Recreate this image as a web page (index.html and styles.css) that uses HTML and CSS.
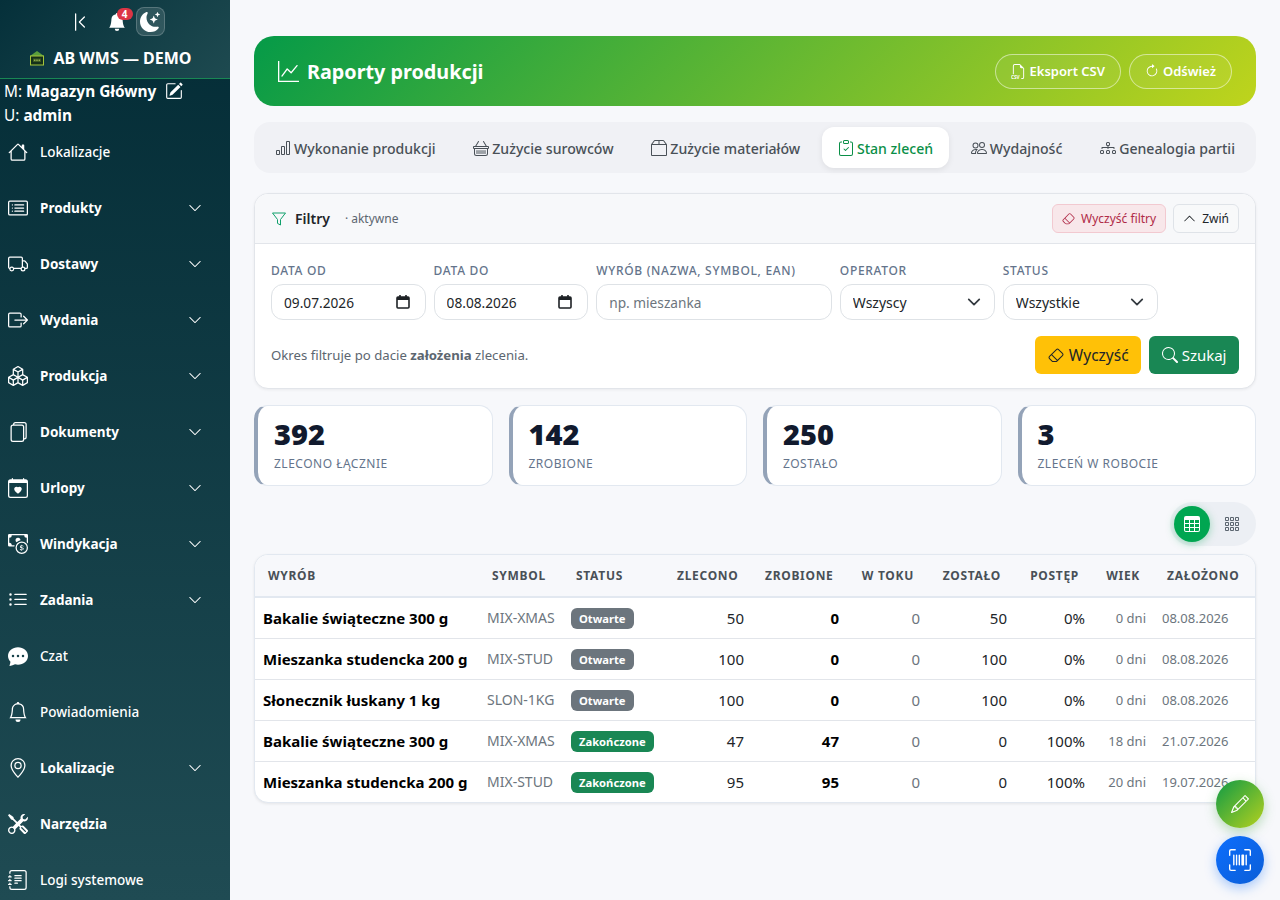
FILE: index.html
```html
<!DOCTYPE html>
<html lang="pl">
<head>
    <meta charset="UTF-8">
    <meta name="viewport" content="width=device-width, initial-scale=1.0">
    <title>Raporty produkcji</title>
    <link rel="stylesheet" href="styles.css">
</head>
<body>
    <svg class="sprite" xmlns="http://www.w3.org/2000/svg">
        <symbol id="i-house" viewBox="0 0 16 16"><path d="M8.707 1.5a1 1 0 0 0-1.414 0L.646 8.146a.5.5 0 0 0 .708.708L2 8.207V13.5A1.5 1.5 0 0 0 3.5 15h9a1.5 1.5 0 0 0 1.5-1.5V8.207l.646.647a.5.5 0 0 0 .708-.708L13 5.793V2.5a.5.5 0 0 0-.5-.5h-1a.5.5 0 0 0-.5.5v1.293zM13 7.207V13.5a.5.5 0 0 1-.5.5h-9a.5.5 0 0 1-.5-.5V7.207l5-5z"/></symbol>
        <symbol id="i-card" viewBox="0 0 16 16"><path d="M14.5 3a.5.5 0 0 1 .5.5v9a.5.5 0 0 1-.5.5h-13a.5.5 0 0 1-.5-.5v-9a.5.5 0 0 1 .5-.5zm-13-1A1.5 1.5 0 0 0 0 3.5v9A1.5 1.5 0 0 0 1.5 14h13a1.5 1.5 0 0 0 1.5-1.5v-9A1.5 1.5 0 0 0 14.5 2z"/><path d="M5 8a.5.5 0 0 1 .5-.5h7a.5.5 0 0 1 0 1h-7A.5.5 0 0 1 5 8m0-2.5a.5.5 0 0 1 .5-.5h7a.5.5 0 0 1 0 1h-7a.5.5 0 0 1-.5-.5m0 5a.5.5 0 0 1 .5-.5h7a.5.5 0 0 1 0 1h-7a.5.5 0 0 1-.5-.5m-1-5a.5.5 0 1 1-1 0 .5.5 0 0 1 1 0M4 8a.5.5 0 1 1-1 0 .5.5 0 0 1 1 0m0 2.5a.5.5 0 1 1-1 0 .5.5 0 0 1 1 0"/></symbol>
        <symbol id="i-truck" viewBox="0 0 16 16"><path d="M0 3.5A1.5 1.5 0 0 1 1.5 2h9A1.5 1.5 0 0 1 12 3.5V5h1.02a1.5 1.5 0 0 1 1.17.563l1.481 1.85a1.5 1.5 0 0 1 .329.938V10.5a1.5 1.5 0 0 1-1.5 1.5H14a2 2 0 1 1-4 0H5a2 2 0 1 1-3.998-.085A1.5 1.5 0 0 1 0 10.5zm1.294 7.456A2 2 0 0 1 4.732 11h5.536a2 2 0 0 1 .732-.732V3.5a.5.5 0 0 0-.5-.5h-9a.5.5 0 0 0-.5.5v7a.5.5 0 0 0 .294.456M12 10a2 2 0 0 1 1.732 1h.768a.5.5 0 0 0 .5-.5V8.35a.5.5 0 0 0-.11-.312l-1.48-1.85A.5.5 0 0 0 13.02 6H12zm-9 1a1 1 0 1 0 0 2 1 1 0 0 0 0-2m9 0a1 1 0 1 0 0 2 1 1 0 0 0 0-2"/></symbol>
        <symbol id="i-out" viewBox="0 0 16 16"><path d="M10 12.5a.5.5 0 0 1-.5.5h-8a.5.5 0 0 1-.5-.5v-9a.5.5 0 0 1 .5-.5h8a.5.5 0 0 1 .5.5v2a.5.5 0 0 0 1 0v-2A1.5 1.5 0 0 0 9.5 2h-8A1.5 1.5 0 0 0 0 3.5v9A1.5 1.5 0 0 0 1.5 14h8a1.5 1.5 0 0 0 1.5-1.5v-2a.5.5 0 0 0-1 0z"/><path d="M15.854 8.354a.5.5 0 0 0 0-.708l-3-3a.5.5 0 0 0-.708.708L14.293 7.5H5.5a.5.5 0 0 0 0 1h8.793l-2.147 2.146a.5.5 0 0 0 .708.708z"/></symbol>
        <symbol id="i-boxes" viewBox="0 0 16 16"><path d="M7.752.066a.5.5 0 0 1 .496 0l3.75 2.143a.5.5 0 0 1 .252.434v3.995l3.498 2A.5.5 0 0 1 16 9.07v4.286a.5.5 0 0 1-.252.434l-3.75 2.143a.5.5 0 0 1-.496 0l-3.502-2-3.502 2.001a.5.5 0 0 1-.496 0l-3.75-2.143A.5.5 0 0 1 0 13.357V9.071a.5.5 0 0 1 .252-.434L3.75 6.638V2.643a.5.5 0 0 1 .252-.434zM4.25 7.504 1.508 9.071l2.742 1.567 2.742-1.567zM7.5 9.933l-2.75 1.571v3.134l2.75-1.571zm1 3.134 2.75 1.571v-3.134L8.5 9.933zm.508-3.996 2.742 1.567 2.742-1.567-2.742-1.567zm2.242-2.433V3.504L8.5 5.076V8.21zM7.5 8.21V5.076L4.75 3.504v3.134zM5.258 2.643 8 4.21l2.742-1.567L8 1.076zM15 9.933l-2.75 1.571v3.134L15 13.067zM3.75 14.638v-3.134L1 9.933v3.134z"/></symbol>
        <symbol id="i-files" viewBox="0 0 16 16"><path d="M13 0H6a2 2 0 0 0-2 2 2 2 0 0 0-2 2v10a2 2 0 0 0 2 2h7a2 2 0 0 0 2-2 2 2 0 0 0 2-2V2a2 2 0 0 0-2-2m0 13V4a2 2 0 0 0-2-2H5a1 1 0 0 1 1-1h7a1 1 0 0 1 1 1v10a1 1 0 0 1-1 1M3 4a1 1 0 0 1 1-1h7a1 1 0 0 1 1 1v10a1 1 0 0 1-1 1H4a1 1 0 0 1-1-1z"/></symbol>
        <symbol id="i-cal-heart" viewBox="0 0 16 16"><path fill-rule="evenodd" d="M4 .5a.5.5 0 0 0-1 0V1H2a2 2 0 0 0-2 2v11a2 2 0 0 0 2 2h12a2 2 0 0 0 2-2V3a2 2 0 0 0-2-2h-1V.5a.5.5 0 0 0-1 0V1H4zM1 14V4h14v10a1 1 0 0 1-1 1H2a1 1 0 0 1-1-1m7-6.507c1.664-1.711 5.825 1.283 0 5.132-5.825-3.85-1.664-6.843 0-5.132"/></symbol>
        <symbol id="i-cash" viewBox="0 0 16 16"><path fill-rule="evenodd" d="M11 15a4 4 0 1 0 0-8 4 4 0 0 0 0 8m5-4a5 5 0 1 1-10 0 5 5 0 0 1 10 0"/><path d="M9.438 11.944c.047.596.518 1.06 1.363 1.116v.44h.375v-.443c.875-.061 1.386-.529 1.386-1.207 0-.618-.39-.936-1.09-1.1l-.296-.07v-1.2c.376.043.614.248.671.532h.658c-.047-.575-.54-1.024-1.329-1.073V8.5h-.375v.45c-.747.073-1.255.522-1.255 1.158 0 .562.378.92 1.007 1.066l.248.061v1.272c-.384-.058-.639-.27-.696-.563h-.668zm1.36-1.354c-.369-.085-.569-.26-.569-.522 0-.294.216-.514.572-.578v1.1zm.432.746c.449.104.655.272.655.569 0 .339-.257.571-.709.635v-1.205z"/><path d="M1 0a1 1 0 0 0-1 1v8a1 1 0 0 0 1 1h4.083q.088-.517.258-1H3a2 2 0 0 0-2-2V3a2 2 0 0 0 2-2h10a2 2 0 0 0 2 2v3.528c.38.34.717.728 1 1.154V1a1 1 0 0 0-1-1z"/><path d="M9.998 5.083 10 5a2 2 0 1 0-3.132 1.65 6 6 0 0 1 3.13-1.567"/></symbol>
        <symbol id="i-list" viewBox="0 0 16 16"><path d="M5 11.5a.5.5 0 0 1 .5-.5h9a.5.5 0 0 1 0 1h-9a.5.5 0 0 1-.5-.5m0-4a.5.5 0 0 1 .5-.5h9a.5.5 0 0 1 0 1h-9a.5.5 0 0 1-.5-.5m0-4a.5.5 0 0 1 .5-.5h9a.5.5 0 0 1 0 1h-9a.5.5 0 0 1-.5-.5m-3 1a1 1 0 1 0 0-2 1 1 0 0 0 0 2m0 4a1 1 0 1 0 0-2 1 1 0 0 0 0 2m0 4a1 1 0 1 0 0-2 1 1 0 0 0 0 2"/></symbol>
        <symbol id="i-chat" viewBox="0 0 16 16"><path d="M16 8c0 3.866-3.582 7-8 7a9 9 0 0 1-2.347-.306c-.584.296-1.925.864-4.181 1.234-.2.032-.352-.176-.273-.362.354-.836.674-1.95.77-2.966C.744 11.37 0 9.76 0 8c0-3.866 3.582-7 8-7s8 3.134 8 7M5 8a1 1 0 1 0-2 0 1 1 0 0 0 2 0m4 0a1 1 0 1 0-2 0 1 1 0 0 0 2 0m3 1a1 1 0 1 0 0-2 1 1 0 0 0 0 2"/></symbol>
        <symbol id="i-bell" viewBox="0 0 16 16"><path d="M8 16a2 2 0 0 0 2-2H6a2 2 0 0 0 2 2M8 1.918l-.797.161A4 4 0 0 0 4 6c0 .628-.134 2.197-.459 3.742-.16.767-.376 1.566-.663 2.258h10.244c-.287-.692-.502-1.49-.663-2.258C12.134 8.197 12 6.628 12 6a4 4 0 0 0-3.203-3.92zM14.22 12c.223.447.481.801.78 1H1c.299-.199.557-.553.78-1C2.68 10.2 3 6.88 3 6c0-2.42 1.72-4.44 4.005-4.901a1 1 0 1 1 1.99 0A5 5 0 0 1 13 6c0 .88.32 4.2 1.22 6"/></symbol>
        <symbol id="i-bell-fill" viewBox="0 0 16 16"><path d="M8 16a2 2 0 0 0 2-2H6a2 2 0 0 0 2 2m.995-14.901a1 1 0 1 0-1.99 0A5 5 0 0 0 3 6c0 1.098-.5 6-2 7h14c-1.5-1-2-5.902-2-7 0-2.42-1.72-4.44-4.005-4.901"/></symbol>
        <symbol id="i-geo" viewBox="0 0 16 16"><path d="M12.166 8.94c-.524 1.062-1.234 2.12-1.96 3.07A32 32 0 0 1 8 14.58a32 32 0 0 1-2.206-2.57c-.726-.95-1.436-2.008-1.96-3.07C3.304 7.867 3 6.862 3 6a5 5 0 0 1 10 0c0 .862-.305 1.867-.834 2.94M8 16s6-5.686 6-10A6 6 0 0 0 2 6c0 4.314 6 10 6 10"/><path d="M8 8a2 2 0 1 1 0-4 2 2 0 0 1 0 4m0 1a3 3 0 1 0 0-6 3 3 0 0 0 0 6"/></symbol>
        <symbol id="i-tools" viewBox="0 0 16 16"><path d="M1 0 0 1l2.2 3.081a1 1 0 0 0 .815.419h.07a1 1 0 0 1 .708.293l2.675 2.675-2.617 2.654A3.003 3.003 0 0 0 0 13a3 3 0 1 0 5.878-.851l2.654-2.617.968.968-.305.914a1 1 0 0 0 .242 1.023l3.27 3.27a.997.997 0 0 0 1.414 0l1.586-1.586a.997.997 0 0 0 0-1.414l-3.27-3.27a1 1 0 0 0-1.023-.242L10.5 9.5l-.96-.96 2.68-2.643A3.005 3.005 0 0 0 16 3q0-.405-.102-.777l-2.14 2.141L12 4l-.364-1.757L13.777.102a3 3 0 0 0-3.675 3.68L7.462 6.46 4.793 3.793a1 1 0 0 1-.293-.707v-.071a1 1 0 0 0-.419-.814zm9.646 10.646a.5.5 0 0 1 .708 0l2.914 2.915a.5.5 0 0 1-.707.707l-2.915-2.914a.5.5 0 0 1 0-.708M3 11l.471.242.529.026.287.445.445.287.026.529L5 13l-.242.471-.026.529-.445.287-.287.445-.529.026L3 15l-.471-.242L2 14.732l-.287-.445L1.268 14l-.026-.529L1 13l.242-.471.026-.529.445-.287.287-.445.529-.026z"/></symbol>
        <symbol id="i-journal" viewBox="0 0 16 16"><path d="M5 10.5a.5.5 0 0 1 .5-.5h2a.5.5 0 0 1 0 1h-2a.5.5 0 0 1-.5-.5m0-2a.5.5 0 0 1 .5-.5h5a.5.5 0 0 1 0 1h-5a.5.5 0 0 1-.5-.5m0-2a.5.5 0 0 1 .5-.5h5a.5.5 0 0 1 0 1h-5a.5.5 0 0 1-.5-.5m0-2a.5.5 0 0 1 .5-.5h5a.5.5 0 0 1 0 1h-5a.5.5 0 0 1-.5-.5"/><path d="M3 0h10a2 2 0 0 1 2 2v12a2 2 0 0 1-2 2H3a2 2 0 0 1-2-2v-1h1v1a1 1 0 0 0 1 1h10a1 1 0 0 0 1-1V2a1 1 0 0 0-1-1H3a1 1 0 0 0-1 1v1H1V2a2 2 0 0 1 2-2"/><path d="M1 5v-.5a.5.5 0 0 1 1 0V5h.5a.5.5 0 0 1 0 1h-2a.5.5 0 0 1 0-1zm0 3v-.5a.5.5 0 0 1 1 0V8h.5a.5.5 0 0 1 0 1h-2a.5.5 0 0 1 0-1zm0 3v-.5a.5.5 0 0 1 1 0v.5h.5a.5.5 0 0 1 0 1h-2a.5.5 0 0 1 0-1z"/></symbol>
        <symbol id="i-down" viewBox="0 0 16 16"><path d="M1.646 4.646a.5.5 0 0 1 .708 0L8 10.293l5.646-5.647a.5.5 0 0 1 .708.708l-6 6a.5.5 0 0 1-.708 0l-6-6a.5.5 0 0 1 0-.708"/></symbol>
        <symbol id="i-up" viewBox="0 0 16 16"><path d="M7.646 4.646a.5.5 0 0 1 .708 0l6 6a.5.5 0 0 1-.708.708L8 5.707l-5.646 5.647a.5.5 0 0 1-.708-.708z"/></symbol>
        <symbol id="i-moon" viewBox="0 0 16 16"><path d="M6 .278a.77.77 0 0 1 .08.858 7.2 7.2 0 0 0-.878 3.46c0 4.021 3.278 7.277 7.318 7.277q.792-.001 1.533-.16a.79.79 0 0 1 .81.316.73.73 0 0 1-.031.893A8.35 8.35 0 0 1 8.344 16C3.734 16 0 12.286 0 7.71 0 4.266 2.114 1.312 5.124.06A.75.75 0 0 1 6 .278"/><path d="M10.794 3.148a.217.217 0 0 1 .412 0l.387 1.162c.173.518.579.924 1.097 1.097l1.162.387a.217.217 0 0 1 0 .412l-1.162.387a1.73 1.73 0 0 0-1.097 1.097l-.387 1.162a.217.217 0 0 1-.412 0l-.387-1.162A1.73 1.73 0 0 0 9.31 6.593l-1.162-.387a.217.217 0 0 1 0-.412l1.162-.387a1.73 1.73 0 0 0 1.097-1.097zM13.863.099a.145.145 0 0 1 .274 0l.258.774c.115.346.386.617.732.732l.774.258a.145.145 0 0 1 0 .274l-.774.258a1.16 1.16 0 0 0-.732.732l-.258.774a.145.145 0 0 1-.274 0l-.258-.774a1.16 1.16 0 0 0-.732-.732l-.774-.258a.145.145 0 0 1 0-.274l.774-.258c.346-.115.617-.386.732-.732z"/></symbol>
        <symbol id="i-edit" viewBox="0 0 16 16"><path d="M15.502 1.94a.5.5 0 0 1 0 .706L14.459 3.69l-2-2L13.502.646a.5.5 0 0 1 .707 0l1.293 1.293zm-1.75 2.456-2-2L4.939 9.21a.5.5 0 0 0-.121.196l-.805 2.414a.25.25 0 0 0 .316.316l2.414-.805a.5.5 0 0 0 .196-.12l6.813-6.814z"/><path d="M1 13.5A1.5 1.5 0 0 0 2.5 15h11a1.5 1.5 0 0 0 1.5-1.5v-6a.5.5 0 0 0-1 0v6a.5.5 0 0 1-.5.5h-11a.5.5 0 0 1-.5-.5v-11a.5.5 0 0 1 .5-.5H9a.5.5 0 0 0 0-1H2.5A1.5 1.5 0 0 0 1 2.5z"/></symbol>
        <symbol id="i-collapse" viewBox="0 0 16 16"><path d="M11.854 3.646a.5.5 0 0 1 0 .708L8.207 8l3.647 3.646a.5.5 0 0 1-.708.708l-4-4a.5.5 0 0 1 0-.708l4-4a.5.5 0 0 1 .708 0M4.5 1a.5.5 0 0 0-.5.5v13a.5.5 0 0 0 1 0v-13a.5.5 0 0 0-.5-.5"/></symbol>
        <symbol id="i-graph" viewBox="0 0 16 16"><path d="M0 0h1v15h15v1H0zm14.817 3.113a.5.5 0 0 1 .07.704l-4.5 5.5a.5.5 0 0 1-.74.037L7.06 6.767l-3.656 5.027a.5.5 0 0 1-.808-.588l4-5.5a.5.5 0 0 1 .758-.06l2.609 2.61 4.15-5.073a.5.5 0 0 1 .704-.07"/></symbol>
        <symbol id="i-bars" viewBox="0 0 16 16"><path d="M4 11H2v3h2zm5-4H7v7h2zm5-5v12h-2V2zm-2-1a1 1 0 0 0-1 1v12a1 1 0 0 0 1 1h2a1 1 0 0 0 1-1V2a1 1 0 0 0-1-1zM6 7a1 1 0 0 1 1-1h2a1 1 0 0 1 1 1v7a1 1 0 0 1-1 1H7a1 1 0 0 1-1-1zm-5 4a1 1 0 0 1 1-1h2a1 1 0 0 1 1 1v3a1 1 0 0 1-1 1H2a1 1 0 0 1-1-1z"/></symbol>
        <symbol id="i-basket" viewBox="0 0 16 16"><path d="M5.757 1.071a.5.5 0 0 1 .172.686L3.383 6h9.234L10.07 1.757a.5.5 0 1 1 .858-.514L13.783 6H15a1 1 0 0 1 1 1v1a1 1 0 0 1-1 1v4.5a2.5 2.5 0 0 1-2.5 2.5h-9A2.5 2.5 0 0 1 1 13.5V9a1 1 0 0 1-1-1V7a1 1 0 0 1 1-1h1.217L5.07 1.243a.5.5 0 0 1 .686-.172zM2 9v4.5A1.5 1.5 0 0 0 3.5 15h9a1.5 1.5 0 0 0 1.5-1.5V9zM1 7v1h14V7zm3 3a.5.5 0 0 1 .5.5v3a.5.5 0 0 1-1 0v-3A.5.5 0 0 1 4 10m2 0a.5.5 0 0 1 .5.5v3a.5.5 0 0 1-1 0v-3A.5.5 0 0 1 6 10m2 0a.5.5 0 0 1 .5.5v3a.5.5 0 0 1-1 0v-3A.5.5 0 0 1 8 10m2 0a.5.5 0 0 1 .5.5v3a.5.5 0 0 1-1 0v-3a.5.5 0 0 1 .5-.5m2 0a.5.5 0 0 1 .5.5v3a.5.5 0 0 1-1 0v-3a.5.5 0 0 1 .5-.5"/></symbol>
        <symbol id="i-box" viewBox="0 0 16 16"><path d="M2.95.4a1 1 0 0 1 .8-.4h8.5a1 1 0 0 1 .8.4l2.85 3.8a.5.5 0 0 1 .1.3V15a1 1 0 0 1-1 1H1a1 1 0 0 1-1-1V4.5a.5.5 0 0 1 .1-.3zM7.5 1H3.75L1.5 4h6zm1 0v3h6l-2.25-3zM15 5H1v10h14z"/></symbol>
        <symbol id="i-clip" viewBox="0 0 16 16"><path d="M10.854 7.146a.5.5 0 0 1 0 .708l-3 3a.5.5 0 0 1-.708 0l-1.5-1.5a.5.5 0 1 1 .708-.708L7.5 9.793l2.646-2.647a.5.5 0 0 1 .708 0"/><path d="M4 1.5H3a2 2 0 0 0-2 2V14a2 2 0 0 0 2 2h10a2 2 0 0 0 2-2V3.5a2 2 0 0 0-2-2h-1v1h1a1 1 0 0 1 1 1V14a1 1 0 0 1-1 1H3a1 1 0 0 1-1-1V3.5a1 1 0 0 1 1-1h1z"/><path d="M9.5 1a.5.5 0 0 1 .5.5v1a.5.5 0 0 1-.5.5h-3a.5.5 0 0 1-.5-.5v-1a.5.5 0 0 1 .5-.5zm-3-1A1.5 1.5 0 0 0 5 1.5v1A1.5 1.5 0 0 0 6.5 4h3A1.5 1.5 0 0 0 11 2.5v-1A1.5 1.5 0 0 0 9.5 0z"/></symbol>
        <symbol id="i-people" viewBox="0 0 16 16"><path d="M15 14s1 0 1-1-1-4-5-4-5 3-5 4 1 1 1 1zm-7.978-1L7 12.996c.001-.264.167-1.03.76-1.72C8.312 10.629 9.282 10 11 10c1.717 0 2.687.63 3.24 1.276.593.69.758 1.457.76 1.72l-.008.002-.014.002zM11 7a2 2 0 1 0 0-4 2 2 0 0 0 0 4m3-2a3 3 0 1 1-6 0 3 3 0 0 1 6 0M6.936 9.28a6 6 0 0 0-1.23-.247A7 7 0 0 0 5 9c-4 0-5 3-5 4q0 1 1 1h4.216A2.24 2.24 0 0 1 5 13c0-1.01.377-2.042 1.09-2.904.243-.294.526-.569.846-.816M4.92 10A5.5 5.5 0 0 0 4 13H1c0-.26.164-1.03.76-1.724.545-.636 1.492-1.256 3.16-1.275ZM1.5 5.5a3 3 0 1 1 6 0 3 3 0 0 1-6 0m3-2a2 2 0 1 0 0 4 2 2 0 0 0 0-4"/></symbol>
        <symbol id="i-tree" viewBox="0 0 16 16"><path d="M6 3.5A1.5 1.5 0 0 1 7.5 2h1A1.5 1.5 0 0 1 10 3.5v1A1.5 1.5 0 0 1 8.5 6v1H14a.5.5 0 0 1 .5.5v1a.5.5 0 0 1-1 0V8h-5v.5a.5.5 0 0 1-1 0V8h-5v.5a.5.5 0 0 1-1 0v-1A.5.5 0 0 1 2 7h5.5V6A1.5 1.5 0 0 1 6 4.5zM8.5 5a.5.5 0 0 0 .5-.5v-1a.5.5 0 0 0-.5-.5h-1a.5.5 0 0 0-.5.5v1a.5.5 0 0 0 .5.5zM0 11.5A1.5 1.5 0 0 1 1.5 10h1A1.5 1.5 0 0 1 4 11.5v1A1.5 1.5 0 0 1 2.5 14h-1A1.5 1.5 0 0 1 0 12.5zm1.5-.5a.5.5 0 0 0-.5.5v1a.5.5 0 0 0 .5.5h1a.5.5 0 0 0 .5-.5v-1a.5.5 0 0 0-.5-.5zm4.5.5A1.5 1.5 0 0 1 7.5 10h1a1.5 1.5 0 0 1 1.5 1.5v1A1.5 1.5 0 0 1 8.5 14h-1A1.5 1.5 0 0 1 6 12.5zm1.5-.5a.5.5 0 0 0-.5.5v1a.5.5 0 0 0 .5.5h1a.5.5 0 0 0 .5-.5v-1a.5.5 0 0 0-.5-.5zm4.5.5a1.5 1.5 0 0 1 1.5-1.5h1a1.5 1.5 0 0 1 1.5 1.5v1a1.5 1.5 0 0 1-1.5 1.5h-1a1.5 1.5 0 0 1-1.5-1.5zm1.5-.5a.5.5 0 0 0-.5.5v1a.5.5 0 0 0 .5.5h1a.5.5 0 0 0 .5-.5v-1a.5.5 0 0 0-.5-.5z"/></symbol>
        <symbol id="i-refresh" viewBox="0 0 16 16"><path fill-rule="evenodd" d="M8 3a5 5 0 1 0 4.546 2.914.5.5 0 0 1 .908-.417A6 6 0 1 1 8 2z"/><path d="M8 4.466V.534a.25.25 0 0 1 .41-.192l2.36 1.966c.12.1.12.284 0 .384L8.41 4.658A.25.25 0 0 1 8 4.466"/></symbol>
        <symbol id="i-eraser" viewBox="0 0 16 16"><path d="M8.086 2.207a2 2 0 0 1 2.828 0l3.879 3.879a2 2 0 0 1 0 2.828l-5.5 5.5A2 2 0 0 1 7.879 15H5.12a2 2 0 0 1-1.414-.586l-2.5-2.5a2 2 0 0 1 0-2.828zm2.121.707a1 1 0 0 0-1.414 0L4.16 7.547l5.293 5.293 4.633-4.633a1 1 0 0 0 0-1.414zM8.746 13.547 3.453 8.254 1.914 9.793a1 1 0 0 0 0 1.414l2.5 2.5a1 1 0 0 0 .707.293H7.88a1 1 0 0 0 .707-.293z"/></symbol>
        <symbol id="i-search" viewBox="0 0 16 16"><path d="M11.742 10.344a6.5 6.5 0 1 0-1.397 1.398h-.001q.044.06.098.115l3.85 3.85a1 1 0 0 0 1.415-1.414l-3.85-3.85a1 1 0 0 0-.115-.1zM12 6.5a5.5 5.5 0 1 1-11 0 5.5 5.5 0 0 1 11 0"/></symbol>
        <symbol id="i-table" viewBox="0 0 16 16"><path d="M0 2a2 2 0 0 1 2-2h12a2 2 0 0 1 2 2v12a2 2 0 0 1-2 2H2a2 2 0 0 1-2-2zm15 2h-4v3h4zm0 4h-4v3h4zm0 4h-4v3h3a1 1 0 0 0 1-1zm-5 3v-3H6v3zm-5 0v-3H1v2a1 1 0 0 0 1 1zm-4-4h4V8H1zm0-4h4V4H1zm5-3v3h4V4zm4 4H6v3h4z"/></symbol>
        <symbol id="i-grid" viewBox="0 0 16 16"><path d="M4 2v2H2V2zm1 12v-2a1 1 0 0 0-1-1H2a1 1 0 0 0-1 1v2a1 1 0 0 0 1 1h2a1 1 0 0 0 1-1m0-5V7a1 1 0 0 0-1-1H2a1 1 0 0 0-1 1v2a1 1 0 0 0 1 1h2a1 1 0 0 0 1-1m0-5V2a1 1 0 0 0-1-1H2a1 1 0 0 0-1 1v2a1 1 0 0 0 1 1h2a1 1 0 0 0 1-1m5 10v-2a1 1 0 0 0-1-1H7a1 1 0 0 0-1 1v2a1 1 0 0 0 1 1h2a1 1 0 0 0 1-1m0-5V7a1 1 0 0 0-1-1H7a1 1 0 0 0-1 1v2a1 1 0 0 0 1 1h2a1 1 0 0 0 1-1m0-5V2a1 1 0 0 0-1-1H7a1 1 0 0 0-1 1v2a1 1 0 0 0 1 1h2a1 1 0 0 0 1-1M9 2v2H7V2zm5 0v2h-2V2zM4 7v2H2V7zm5 0v2H7V7zm5 0h-2v2h2zM4 12v2H2v-2zm5 0v2H7v-2zm5 0v2h-2v-2zM12 1a1 1 0 0 0-1 1v2a1 1 0 0 0 1 1h2a1 1 0 0 0 1-1V2a1 1 0 0 0-1-1zm-1 6a1 1 0 0 1 1-1h2a1 1 0 0 1 1 1v2a1 1 0 0 1-1 1h-2a1 1 0 0 1-1-1zm1 4a1 1 0 0 0-1 1v2a1 1 0 0 0 1 1h2a1 1 0 0 0 1-1v-2a1 1 0 0 0-1-1z"/></symbol>
        <symbol id="i-pencil" viewBox="0 0 16 16"><path d="M12.146.146a.5.5 0 0 1 .708 0l3 3a.5.5 0 0 1 0 .708l-10 10a.5.5 0 0 1-.168.11l-5 2a.5.5 0 0 1-.65-.65l2-5a.5.5 0 0 1 .11-.168zM11.207 2.5 13.5 4.793 14.793 3.5 12.5 1.207zm1.586 3L10.5 3.207 4 9.707V10h.5a.5.5 0 0 1 .5.5v.5h.5a.5.5 0 0 1 .5.5v.5h.293zm-9.761 5.175-.106.106-1.528 3.821 3.821-1.528.106-.106A.5.5 0 0 1 5 12.5V12h-.5a.5.5 0 0 1-.5-.5V11h-.5a.5.5 0 0 1-.468-.325"/></symbol>
        <symbol id="i-scan" viewBox="0 0 16 16"><path d="M1.5 1a.5.5 0 0 0-.5.5v3a.5.5 0 0 1-1 0v-3A1.5 1.5 0 0 1 1.5 0h3a.5.5 0 0 1 0 1zM11 .5a.5.5 0 0 1 .5-.5h3A1.5 1.5 0 0 1 16 1.5v3a.5.5 0 0 1-1 0v-3a.5.5 0 0 0-.5-.5h-3a.5.5 0 0 1-.5-.5M.5 11a.5.5 0 0 1 .5.5v3a.5.5 0 0 0 .5.5h3a.5.5 0 0 1 0 1h-3A1.5 1.5 0 0 1 0 14.5v-3a.5.5 0 0 1 .5-.5m15 0a.5.5 0 0 1 .5.5v3a1.5 1.5 0 0 1-1.5 1.5h-3a.5.5 0 0 1 0-1h3a.5.5 0 0 0 .5-.5v-3a.5.5 0 0 1 .5-.5M3 4.5a.5.5 0 0 1 1 0v7a.5.5 0 0 1-1 0zm2 0a.5.5 0 0 1 1 0v7a.5.5 0 0 1-1 0zm2 0a.5.5 0 0 1 1 0v7a.5.5 0 0 1-1 0zm2 0a.5.5 0 0 1 .5-.5h1a.5.5 0 0 1 .5.5v7a.5.5 0 0 1-.5.5h-1a.5.5 0 0 1-.5-.5zm3 0a.5.5 0 0 1 1 0v7a.5.5 0 0 1-1 0z"/></symbol>
        <symbol id="i-file" viewBox="0 0 16 16"><path d="M14 4.5V14a2 2 0 0 1-2 2h-1v-1h1a1 1 0 0 0 1-1V4.5h-2A1.5 1.5 0 0 1 9.5 3V1H4a1 1 0 0 0-1 1v9H2V2a2 2 0 0 1 2-2h5.5z"/></symbol>
    </svg>

    <aside class="sidebar">
        <div class="side-head">
            <div class="side-tools">
                <button class="side-tool"><svg class="ico-20"><use href="#i-collapse"/></svg></button>
                <button class="side-tool bell-tool">
                    <svg class="ico-18"><use href="#i-bell-fill"/></svg>
                    <span class="bell-badge">4</span>
                </button>
                <button class="side-tool theme-tool"><svg class="ico-20"><use href="#i-moon"/></svg></button>
            </div>
            <div class="brand">
                <svg class="brand-logo" viewBox="0 0 16 16">
                    <path d="M1 6 8 1l7 5z" fill="#5a9e3c"/>
                    <rect x="1.5" y="6" width="13" height="9" fill="#14301a" stroke="#a5c53a" stroke-width="1"/>
                    <rect x="4" y="8.5" width="8" height="3.5" fill="#3c5a22"/>
                    <path d="M5 10.2h1.4M7.3 10.2h1.4M9.6 10.2H11" stroke="#b9d06a" stroke-width="1"/>
                </svg>
                <span>AB WMS — DEMO</span>
            </div>
        </div>
        <div class="side-user">
            <div>M: <strong>Magazyn Główny</strong> <svg class="ico-18 edit-ico"><use href="#i-edit"/></svg></div>
            <div>U: <strong>admin</strong></div>
        </div>
        <nav class="side-nav">
            <a class="nav-item"><svg class="nav-ico"><use href="#i-house"/></svg><span>Lokalizacje</span></a>
            <a class="nav-item group"><svg class="nav-ico"><use href="#i-card"/></svg><span>Produkty</span><svg class="nav-arrow"><use href="#i-down"/></svg></a>
            <a class="nav-item group"><svg class="nav-ico"><use href="#i-truck"/></svg><span>Dostawy</span><svg class="nav-arrow"><use href="#i-down"/></svg></a>
            <a class="nav-item group"><svg class="nav-ico"><use href="#i-out"/></svg><span>Wydania</span><svg class="nav-arrow"><use href="#i-down"/></svg></a>
            <a class="nav-item group"><svg class="nav-ico"><use href="#i-boxes"/></svg><span>Produkcja</span><svg class="nav-arrow"><use href="#i-down"/></svg></a>
            <a class="nav-item group"><svg class="nav-ico"><use href="#i-files"/></svg><span>Dokumenty</span><svg class="nav-arrow"><use href="#i-down"/></svg></a>
            <a class="nav-item group"><svg class="nav-ico"><use href="#i-cal-heart"/></svg><span>Urlopy</span><svg class="nav-arrow"><use href="#i-down"/></svg></a>
            <a class="nav-item group"><svg class="nav-ico"><use href="#i-cash"/></svg><span>Windykacja</span><svg class="nav-arrow"><use href="#i-down"/></svg></a>
            <a class="nav-item group"><svg class="nav-ico"><use href="#i-list"/></svg><span>Zadania</span><svg class="nav-arrow"><use href="#i-down"/></svg></a>
            <a class="nav-item"><svg class="nav-ico"><use href="#i-chat"/></svg><span>Czat</span></a>
            <a class="nav-item"><svg class="nav-ico"><use href="#i-bell"/></svg><span>Powiadomienia</span></a>
            <a class="nav-item group"><svg class="nav-ico"><use href="#i-geo"/></svg><span>Lokalizacje</span><svg class="nav-arrow"><use href="#i-down"/></svg></a>
            <a class="nav-item group"><svg class="nav-ico"><use href="#i-tools"/></svg><span>Narzędzia</span></a>
            <a class="nav-item"><svg class="nav-ico"><use href="#i-journal"/></svg><span>Logi systemowe</span></a>
        </nav>
    </aside>

    <main class="content">
        <header class="hero">
            <h1><svg class="hero-ico"><use href="#i-graph"/></svg>Raporty produkcji</h1>
            <div class="hero-actions">
                <button class="hero-btn">
                    <svg class="ico-15" viewBox="0 0 16 16"><use href="#i-file"/><text x="0" y="15.5" class="csv-mark">CSV</text></svg>
                    Eksport CSV
                </button>
                <button class="hero-btn"><svg class="ico-14"><use href="#i-refresh"/></svg>Odśwież</button>
            </div>
        </header>

        <div class="tabs">
            <a class="tab"><svg class="ico-16"><use href="#i-bars"/></svg>Wykonanie produkcji</a>
            <a class="tab"><svg class="ico-16"><use href="#i-basket"/></svg>Zużycie surowców</a>
            <a class="tab"><svg class="ico-16"><use href="#i-box"/></svg>Zużycie materiałów</a>
            <a class="tab active"><svg class="ico-16"><use href="#i-clip"/></svg>Stan zleceń</a>
            <a class="tab"><svg class="ico-16"><use href="#i-people"/></svg>Wydajność</a>
            <a class="tab"><svg class="ico-16"><use href="#i-tree"/></svg>Genealogia partii</a>
        </div>

        <section class="filters">
            <div class="filters-head">
                <svg class="funnel" viewBox="0 0 16 16"><path d="M1.5 2h13L9.5 8.5V14l-3-1.6V8.5z"/></svg>
                <span class="filters-title">Filtry</span>
                <span class="filters-state">· aktywne</span>
                <button class="mini-btn danger"><svg class="ico-13"><use href="#i-eraser"/></svg>Wyczyść filtry</button>
                <button class="mini-btn"><svg class="ico-13"><use href="#i-up"/></svg>Zwiń</button>
            </div>
            <div class="filters-body">
                <div class="filter-row">
                    <div class="field f-date">
                        <label>Data od</label>
                        <div class="box"><input type="text" value="09.07.2026"><svg class="cal-ico" viewBox="0 0 14 14"><path d="M4 0v2M10 0v2" stroke="#1d2125" stroke-width="1.6"/><rect x="1" y="2" width="12" height="11" rx="1" fill="none" stroke="#1d2125" stroke-width="1.6"/><rect x="1" y="2" width="12" height="3" fill="#1d2125"/></svg></div>
                    </div>
                    <div class="field f-date">
                        <label>Data do</label>
                        <div class="box"><input type="text" value="08.08.2026"><svg class="cal-ico" viewBox="0 0 14 14"><path d="M4 0v2M10 0v2" stroke="#1d2125" stroke-width="1.6"/><rect x="1" y="2" width="12" height="11" rx="1" fill="none" stroke="#1d2125" stroke-width="1.6"/><rect x="1" y="2" width="12" height="3" fill="#1d2125"/></svg></div>
                    </div>
                    <div class="field f-product">
                        <label>Wyrób (nazwa, symbol, EAN)</label>
                        <div class="box"><input type="text" placeholder="np. mieszanka"></div>
                    </div>
                    <div class="field f-select">
                        <label>Operator</label>
                        <div class="box"><select><option>Wszyscy</option></select><svg class="select-arrow" viewBox="0 0 16 16"><path d="m2 5 6 6 6-6" fill="none" stroke="#343a40" stroke-width="2" stroke-linecap="round" stroke-linejoin="round"/></svg></div>
                    </div>
                    <div class="field f-select">
                        <label>Status</label>
                        <div class="box"><select><option>Wszystkie</option></select><svg class="select-arrow" viewBox="0 0 16 16"><path d="m2 5 6 6 6-6" fill="none" stroke="#343a40" stroke-width="2" stroke-linecap="round" stroke-linejoin="round"/></svg></div>
                    </div>
                </div>
                <div class="filter-foot">
                    <p>Okres filtruje po dacie <b>założenia</b> zlecenia.</p>
                    <button class="btn btn-warn"><svg class="ico-16"><use href="#i-eraser"/></svg>Wyczyść</button>
                    <button class="btn btn-go"><svg class="ico-16"><use href="#i-search"/></svg>Szukaj</button>
                </div>
            </div>
        </section>

        <section class="stats">
            <div class="stat"><div class="stat-num">392</div><div class="stat-label">Zlecono łącznie</div></div>
            <div class="stat"><div class="stat-num">142</div><div class="stat-label">Zrobione</div></div>
            <div class="stat"><div class="stat-num">250</div><div class="stat-label">Zostało</div></div>
            <div class="stat"><div class="stat-num">3</div><div class="stat-label">Zleceń w robocie</div></div>
        </section>

        <div class="view-bar">
            <div class="view-switch">
                <button class="view-btn active"><svg class="ico-16"><use href="#i-table"/></svg></button>
                <button class="view-btn"><svg class="ico-16"><use href="#i-grid"/></svg></button>
            </div>
        </div>

        <div class="table-card">
            <table>
                <colgroup>
                    <col class="c-name"><col class="c-sym"><col class="c-status"><col class="c-qty">
                    <col class="c-done"><col class="c-prog"><col class="c-left"><col class="c-pct">
                    <col class="c-age"><col class="c-date">
                </colgroup>
                <thead>
                    <tr>
                        <th>Wyrób</th><th>Symbol</th><th>Status</th><th class="num">Zlecono</th><th class="num">Zrobione</th>
                        <th class="num">W toku</th><th class="num">Zostało</th><th class="num">Postęp</th><th class="num">Wiek</th><th>Założono</th>
                    </tr>
                </thead>
                <tbody>
                    <tr>
                        <td class="name">Bakalie świąteczne 300 g</td><td class="muted sym">MIX-XMAS</td><td><span class="badge open">Otwarte</span></td>
                        <td class="num">50</td><td class="num strong">0</td><td class="num muted">0</td><td class="num">50</td><td class="num">0%</td><td class="num muted small">0 dni</td><td class="muted small">08.08.2026</td>
                    </tr>
                    <tr>
                        <td class="name">Mieszanka studencka 200 g</td><td class="muted sym">MIX-STUD</td><td><span class="badge open">Otwarte</span></td>
                        <td class="num">100</td><td class="num strong">0</td><td class="num muted">0</td><td class="num">100</td><td class="num">0%</td><td class="num muted small">0 dni</td><td class="muted small">08.08.2026</td>
                    </tr>
                    <tr>
                        <td class="name">Słonecznik łuskany 1 kg</td><td class="muted sym">SLON-1KG</td><td><span class="badge open">Otwarte</span></td>
                        <td class="num">100</td><td class="num strong">0</td><td class="num muted">0</td><td class="num">100</td><td class="num">0%</td><td class="num muted small">0 dni</td><td class="muted small">08.08.2026</td>
                    </tr>
                    <tr>
                        <td class="name">Bakalie świąteczne 300 g</td><td class="muted sym">MIX-XMAS</td><td><span class="badge done">Zakończone</span></td>
                        <td class="num">47</td><td class="num strong">47</td><td class="num muted">0</td><td class="num">0</td><td class="num">100%</td><td class="num muted small">18 dni</td><td class="muted small">21.07.2026</td>
                    </tr>
                    <tr>
                        <td class="name">Mieszanka studencka 200 g</td><td class="muted sym">MIX-STUD</td><td><span class="badge done">Zakończone</span></td>
                        <td class="num">95</td><td class="num strong">95</td><td class="num muted">0</td><td class="num">0</td><td class="num">100%</td><td class="num muted small">20 dni</td><td class="muted small">19.07.2026</td>
                    </tr>
                </tbody>
            </table>
        </div>
    </main>

    <button class="fab fab-edit"><svg class="ico-18"><use href="#i-pencil"/></svg></button>
    <button class="fab fab-scan"><svg class="ico-22"><use href="#i-scan"/></svg></button>
</body>
</html>
```

FILE: styles.css
```css
* {
    box-sizing: border-box;
}
html, body {
    height: 100%;
}
body {
    margin: 0;
    display: flex;
    overflow: hidden;
    font-family: "Noto Sans", Arial, sans-serif;
    font-size: 14px;
    color: #212529;
    background-color: #f7f8fb;
}
button, input, select {
    font-family: inherit;
}
svg {
    fill: currentColor;
    flex-shrink: 0;
}
.sprite {
    display: none;
}
.ico-13 { width: 13px; height: 13px; }
.ico-14 { width: 14px; height: 14px; }
.ico-15 { width: 15px; height: 15px; }
.ico-16 { width: 16px; height: 16px; }
.ico-18 { width: 18px; height: 18px; }
.ico-20 { width: 20px; height: 20px; }
.ico-22 { width: 22px; height: 22px; }

/* sidebar */
.sidebar {
    width: 230px;
    height: 100%;
    flex-shrink: 0;
    overflow: hidden;
    color: #fff;
    background: linear-gradient(180deg, #032c36 0%, #1f4b53 100%);
}
.side-head {
    height: 79px;
    border-bottom: 1px solid #198754;
    background: linear-gradient(135deg, #05303a 0%, #1e4a50 100%);
}
.side-tools {
    display: flex;
    justify-content: center;
    align-items: center;
    padding-top: 7px;
    height: 36px;
}
.side-tool {
    position: relative;
    display: flex;
    align-items: center;
    justify-content: center;
    width: 29px;
    height: 29px;
    padding: 0;
    color: #fff;
    background: none;
    border: 1px solid transparent;
    border-radius: 8px;
}
.side-tool:first-child {
    margin-right: 8px;
}
.bell-tool {
    margin-right: 4px;
}
.theme-tool {
    background-color: rgba(255, 255, 255, 0.12);
    border-color: rgba(255, 255, 255, 0.2);
}
.bell-badge {
    position: absolute;
    top: 0;
    right: -2px;
    min-width: 16px;
    height: 12px;
    padding: 0 4px;
    font-size: 10px;
    font-weight: 700;
    line-height: 12px;
    border-radius: 8px;
    background-color: #dc3545;
}
.brand {
    display: flex;
    justify-content: center;
    align-items: center;
    gap: 9px;
    margin-top: 11px;
    padding-right: 10px;
    font-size: 16px;
    font-weight: 700;
}
.brand-logo {
    width: 16px;
    height: 16px;
}
.side-user {
    padding: 1px 0 0 4px;
    font-size: 15.4px;
    line-height: 24px;
    height: 45px;
}
.side-user strong {
    font-weight: 700;
}
.edit-ico {
    vertical-align: -3px;
    margin-left: 5px;
}
.nav-item {
    display: flex;
    align-items: center;
    height: 56px;
    padding: 0 28px 0 8px;
    color: #fff;
    font-size: 13.5px;
    font-weight: 500;
}
.nav-item.group {
    font-weight: 700;
}
.nav-item span {
    flex: 1;
}
.nav-ico {
    width: 20px;
    height: 20px;
    margin-right: 12px;
}
.nav-arrow {
    width: 14px;
    height: 14px;
}

/* main column */
.content {
    flex: 1;
    min-width: 0;
    padding: 36px 24px 0;
}
.hero {
    display: flex;
    align-items: center;
    justify-content: space-between;
    height: 70px;
    padding: 0 24px;
    color: #fff;
    border-radius: 20px;
    background: linear-gradient(135deg, #059a48 0%, #bfd41c 100%);
}
.hero h1 {
    display: flex;
    align-items: center;
    margin: 0;
    font-size: 19.8px;
    font-weight: 700;
}
.hero-ico {
    width: 21px;
    height: 21px;
    margin-right: 8px;
}
.hero-actions {
    display: flex;
    gap: 8px;
}
.hero-btn {
    display: flex;
    align-items: center;
    gap: 4px;
    height: 35px;
    padding: 0 15px;
    color: #fff;
    font-size: 13px;
    font-weight: 600;
    background-color: rgba(255, 255, 255, 0.05);
    border: 1px solid rgba(255, 255, 255, 0.5);
    border-radius: 18px;
}
.csv-mark {
    font-size: 5px;
    font-weight: 700;
}

.tabs {
    display: flex;
    justify-content: space-between;
    align-items: center;
    height: 51px;
    margin-top: 16px;
    padding: 0 5px;
    border-radius: 16px;
    background-color: #f0f1f5;
}
.tab {
    display: flex;
    align-items: center;
    gap: 3px;
    height: 41px;
    padding: 1px 16px 0;
    color: #495057;
    font-size: 14.1px;
    font-weight: 500;
    border-radius: 12px;
}
.tab.active {
    color: #0a8f47;
    background-color: #fff;
    box-shadow: 0 2px 6px rgba(0, 0, 0, 0.08);
}

/* filters */
.filters {
    margin-top: 20px;
    background-color: #fff;
    border: 1px solid #e2e5ea;
    border-radius: 14px;
    box-shadow: 0 1px 3px rgba(0, 0, 0, 0.06);
    overflow: hidden;
}
.filters-head {
    display: flex;
    align-items: center;
    height: 50px;
    padding: 0 16px;
    background-color: #f7f8fa;
    border-bottom: 1px solid #e2e5ea;
}
.funnel {
    width: 16px;
    height: 16px;
    fill: none;
    stroke: #0fa06b;
    stroke-width: 1;
    margin-right: 8px;
}
.filters-title {
    font-size: 14px;
    font-weight: 600;
    color: #212529;
}
.filters-state {
    flex: 1;
    margin-left: 15px;
    font-size: 12px;
    color: #5c6670;
}
.mini-btn {
    display: flex;
    align-items: center;
    gap: 6px;
    height: 29px;
    margin-left: 7px;
    padding: 0 9px;
    color: #212529;
    font-size: 12px;
    background-color: #f8f9fa;
    border: 1px solid #dfe3e8;
    border-radius: 6px;
}
.mini-btn.danger {
    color: #b02a47;
    background-color: #f8e7ea;
    border-color: #f2c9d0;
}
.filters-body {
    padding: 18px 16px 14px;
}
.filter-row {
    display: flex;
    gap: 8px;
}
.field label {
    display: block;
    margin-bottom: 5px;
    color: #64748b;
    font-size: 12px;
    font-weight: 500;
    letter-spacing: 0.7px;
    text-transform: uppercase;
}
.f-date { width: 154.6px; }
.f-product { width: 235.6px; }
.f-select { width: 155px; }
.box {
    display: flex;
    align-items: center;
    height: 36px;
    padding: 0 12px;
    background-color: #fff;
    border: 1px solid #dee2e6;
    border-radius: 12px;
}
.box input, .box select {
    flex: 1;
    width: 100%;
    min-width: 0;
    padding: 0;
    color: #212529;
    font-size: 14px;
    background: none;
    border: none;
    outline: none;
    appearance: none;
}
.box input {
    font-size: 13.7px;
}
.box input::placeholder {
    color: #6c757d;
}
.cal-ico {
    width: 14px;
    height: 14px;
    margin-right: 3px;
}
.select-arrow {
    width: 14px;
    height: 14px;
    margin-right: 1px;
}
.filter-foot {
    display: flex;
    align-items: center;
    gap: 8px;
    margin-top: 16px;
}
.filter-foot p {
    flex: 1;
    margin: 0;
    color: #5c6670;
    font-size: 13.2px;
}
.btn {
    display: flex;
    align-items: center;
    gap: 4px;
    height: 38px;
    padding: 0 12.5px;
    font-size: 15px;
    border: none;
    border-radius: 6px;
}
.btn-warn {
    gap: 5px;
    color: #212529;
    font-size: 15.5px;
    background-color: #ffc107;
}
.btn-go {
    color: #fff;
    background-color: #198754;
}

/* stats */
.stats {
    display: grid;
    grid-template-columns: repeat(4, 1fr);
    gap: 16px;
    margin-top: 16px;
}
.stat {
    height: 81px;
    padding: 10px 16px;
    background-color: #fff;
    border: 1px solid #e2e8f0;
    border-left: 4px solid #94a3b8;
    border-radius: 14px;
}
.stat-num {
    color: #111a2e;
    font-size: 29px;
    font-weight: 900;
    line-height: 36px;
}
.stat-label {
    margin-top: 3px;
    color: #64748b;
    font-size: 12px;
    letter-spacing: 0.5px;
    text-transform: uppercase;
}

.view-bar {
    display: flex;
    justify-content: flex-end;
    margin-top: 16px;
}
.view-switch {
    display: flex;
    align-items: center;
    gap: 4px;
    height: 44px;
    padding: 4px 6px 4px 4px;
    border-radius: 22px;
    background-color: #eceff4;
}
.view-btn {
    display: flex;
    align-items: center;
    justify-content: center;
    width: 36px;
    height: 36px;
    padding: 0;
    color: #5c6670;
    background: none;
    border: none;
    border-radius: 50%;
}
.view-btn.active {
    color: #fff;
    background-color: #00a651;
    box-shadow: 0 2px 8px rgba(0, 166, 81, 0.35);
}

/* table */
.table-card {
    margin-top: 8px;
    overflow: hidden;
    background-color: #fff;
    border: 1px solid #e2e8f0;
    border-radius: 14px;
    box-shadow: 0 1px 3px rgba(0, 0, 0, 0.08);
}
table {
    width: 1000px;
    table-layout: fixed;
    border-collapse: collapse;
}
.c-name { width: 224px; }
.c-sym { width: 84px; }
.c-status { width: 101px; }
.c-qty { width: 88px; }
.c-done { width: 95px; }
.c-prog { width: 81px; }
.c-left { width: 87px; }
.c-pct { width: 78px; }
.c-age { width: 61px; }
.c-date { width: 101px; }
th {
    height: 42px;
    padding: 0 14px 0 13px;
    color: #495057;
    font-size: 12px;
    font-weight: 700;
    letter-spacing: 0.7px;
    text-align: left;
    text-transform: uppercase;
    white-space: nowrap;
    background-color: #f7f8fb;
    border-bottom: 2px solid #e2e8f0;
}
td {
    height: 41px;
    padding: 0 8px;
    font-size: 15px;
    color: #212529;
    white-space: nowrap;
    border-bottom: 1px solid #e2e5ea;
}
tr:last-child td {
    border-bottom: none;
}
th.num, td.num {
    text-align: right;
}
.name {
    color: #000;
    font-size: 15px;
    font-weight: 700;
}
.strong {
    color: #000;
    font-weight: 700;
}
.muted {
    color: #6c757d;
}
.sym {
    font-size: 14px;
}
.small {
    font-size: 13px;
}
.badge {
    display: inline-block;
    margin-top: 2px;
    padding: 0 8px;
    color: #fff;
    font-size: 11.2px;
    font-weight: 700;
    line-height: 21px;
    border-radius: 6px;
}
.badge.open { background-color: #6c757d; }
.badge.done { background-color: #198754; }

/* floating buttons */
.fab {
    position: fixed;
    right: 16px;
    display: flex;
    align-items: center;
    justify-content: center;
    width: 48px;
    height: 48px;
    padding: 0;
    color: #fff;
    border: none;
    border-radius: 50%;
}
.fab-edit {
    bottom: 72px;
    background: linear-gradient(135deg, #0f9a45 0%, #b5d11f 100%);
    box-shadow: 0 4px 12px rgba(60, 160, 60, 0.35);
}
.fab-scan {
    bottom: 16px;
    background: linear-gradient(135deg, #0d6efd 0%, #0b5ed7 100%);
    box-shadow: 0 4px 12px rgba(13, 110, 253, 0.35);
}
```
